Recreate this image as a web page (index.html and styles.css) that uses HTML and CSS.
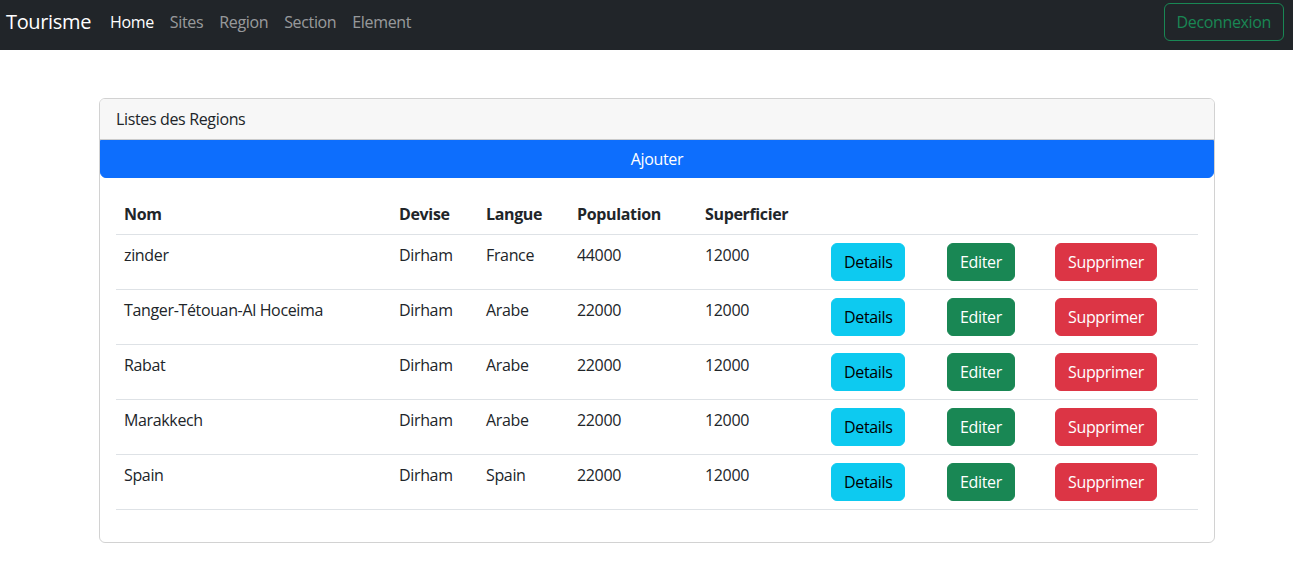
FILE: index.html
```html
<!DOCTYPE html>
<html lang="fr">
<head>
<meta charset="utf-8">
<title>Tourisme</title>
<link rel="stylesheet" href="styles.css">
</head>
<body>
<nav class="navbar">
  <div class="nav-left">
    <a class="brand" href="#">Tourisme</a>
    <ul class="nav-links">
      <li><a class="nav-link active" href="#">Home</a></li>
      <li><a class="nav-link" href="#">Sites</a></li>
      <li><a class="nav-link" href="#">Region</a></li>
      <li><a class="nav-link" href="#">Section</a></li>
      <li><a class="nav-link" href="#">Element</a></li>
    </ul>
  </div>
  <button class="btn btn-outline-success">Deconnexion</button>
</nav>

<main class="page">
  <div class="card">
    <div class="card-header">Listes des Regions</div>
    <button class="btn btn-primary btn-block">Ajouter</button>
    <div class="card-body">
      <table class="table">
        <thead>
          <tr>
            <th class="c1">Nom</th>
            <th class="c2">Devise</th>
            <th class="c3">Langue</th>
            <th class="c4">Population</th>
            <th class="c5">Superficier</th>
            <th class="c6"></th>
            <th class="c7"></th>
            <th class="c8"></th>
          </tr>
        </thead>
        <tbody>
          <tr>
            <td>zinder</td><td>Dirham</td><td>France</td><td>44000</td><td>12000</td>
            <td><button class="btn btn-info">Details</button></td>
            <td><button class="btn btn-success">Editer</button></td>
            <td><button class="btn btn-danger">Supprimer</button></td>
          </tr>
          <tr>
            <td>Tanger-Tétouan-Al Hoceima</td><td>Dirham</td><td>Arabe</td><td>22000</td><td>12000</td>
            <td><button class="btn btn-info">Details</button></td>
            <td><button class="btn btn-success">Editer</button></td>
            <td><button class="btn btn-danger">Supprimer</button></td>
          </tr>
          <tr>
            <td>Rabat</td><td>Dirham</td><td>Arabe</td><td>22000</td><td>12000</td>
            <td><button class="btn btn-info">Details</button></td>
            <td><button class="btn btn-success">Editer</button></td>
            <td><button class="btn btn-danger">Supprimer</button></td>
          </tr>
          <tr>
            <td>Marakkech</td><td>Dirham</td><td>Arabe</td><td>22000</td><td>12000</td>
            <td><button class="btn btn-info">Details</button></td>
            <td><button class="btn btn-success">Editer</button></td>
            <td><button class="btn btn-danger">Supprimer</button></td>
          </tr>
          <tr>
            <td>Spain</td><td>Dirham</td><td>Spain</td><td>22000</td><td>12000</td>
            <td><button class="btn btn-info">Details</button></td>
            <td><button class="btn btn-success">Editer</button></td>
            <td><button class="btn btn-danger">Supprimer</button></td>
          </tr>
        </tbody>
      </table>
    </div>
  </div>
</main>
</body>
</html>
```

FILE: styles.css
```css
* { box-sizing: border-box; }

body {
  margin: 0;
  font-family: "Open Sans", "Noto Sans", sans-serif;
  font-size: 16px;
  line-height: 24px;
  letter-spacing: -0.35px;
  color: #212529;
  background: #fff;
}

.navbar {
  height: 50px;
  background: #212529;
  display: flex;
  justify-content: space-between;
  align-items: flex-start;
  padding: 3px 9px 0 6px;
}

.nav-left {
  display: flex;
  align-items: center;
  height: 38px;
}

.brand {
  color: #fff;
  text-decoration: none;
  font-size: 20px;
  line-height: 30px;
  width: 96px;
}

.nav-links {
  display: flex;
  list-style: none;
  margin: 0;
  padding: 0;
}

.nav-link {
  display: block;
  padding: 7px 8px;
  color: rgba(255, 255, 255, 0.55);
  text-decoration: none;
}

.nav-link.active { color: #fff; }

.btn {
  display: inline-block;
  font-family: inherit;
  font-size: 16px;
  line-height: 24px;
  letter-spacing: inherit;
  padding: 6px 12px;
  border: 1px solid transparent;
  border-radius: 6px;
  cursor: pointer;
  text-align: center;
}

.btn-outline-success {
  background: transparent;
  color: #198754;
  border-color: #198754;
}

.btn-primary { background: #0d6efd; border-color: #0d6efd; color: #fff; }
.btn-info { background: #0dcaf0; border-color: #0dcaf0; color: #000; }
.btn-success { background: #198754; border-color: #198754; color: #fff; }
.btn-danger { background: #dc3545; border-color: #dc3545; color: #fff; }

.btn-block {
  display: block;
  width: 100%;
  border-radius: 0 0 6px 6px;
}

.page {
  padding: 48px 0 0 99px;
}

.card {
  width: 1116px;
  border: 1px solid rgba(0, 0, 0, 0.175);
  border-radius: 6px;
  overflow: hidden;
}

.card-header {
  background: #f7f7f7;
  padding: 8px 16px;
  border-bottom: 1px solid rgba(0, 0, 0, 0.175);
}

.card-body {
  padding: 16px;
}

.table {
  width: 100%;
  border-collapse: collapse;
  margin-bottom: 16px;
  vertical-align: top;
  table-layout: fixed;
}

.table th,
.table td {
  padding: 8px;
  text-align: left;
  border-bottom: 1px solid #dee2e6;
  vertical-align: top;
}

.table th { font-weight: 700; }

.c1 { width: 275px; }
.c2 { width: 87px; }
.c3 { width: 91px; }
.c4 { width: 128px; }
.c5 { width: 126px; }
.c6 { width: 116px; }
.c7 { width: 108px; }
.c8 { width: 151px; }
```
